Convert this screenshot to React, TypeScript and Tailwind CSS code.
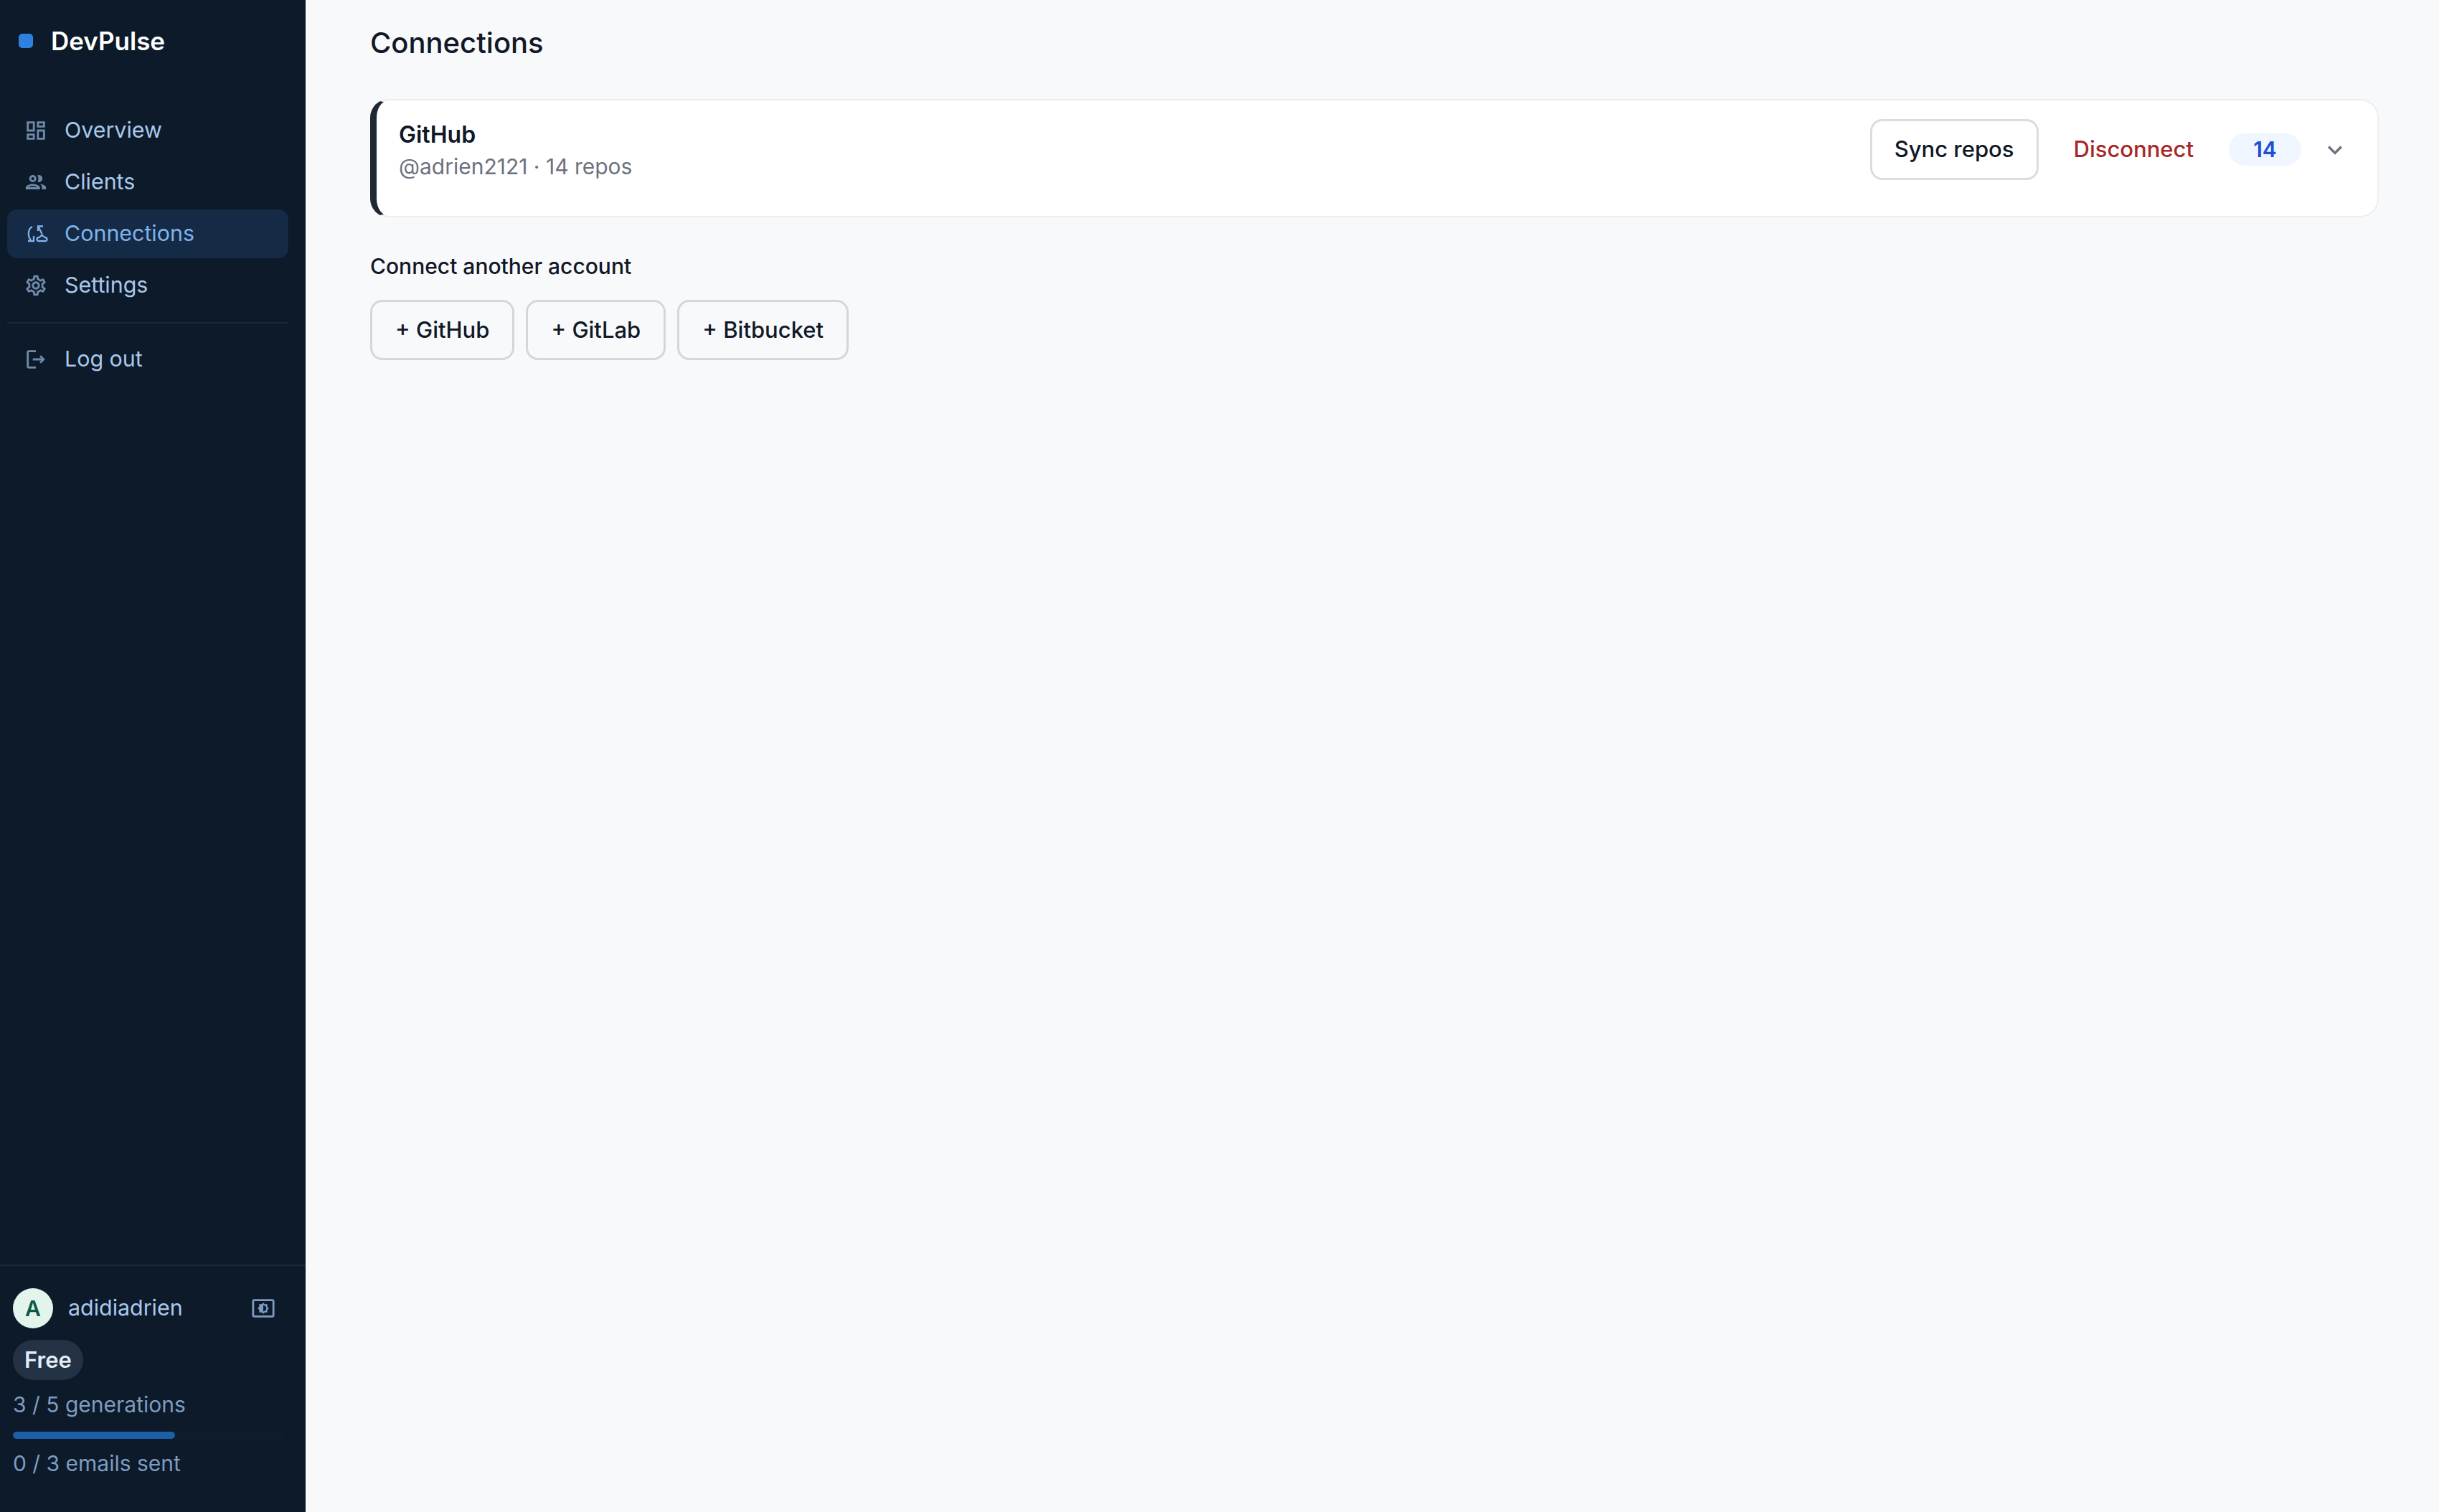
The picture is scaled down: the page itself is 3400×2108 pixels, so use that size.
import React from 'react';
import {
  MdOutlineDashboard,
  MdOutlineKeyboardArrowDown,
  MdOutlineLogout,
  MdOutlinePeople,
  MdOutlineSettings,
  MdOutlineSettingsBrightness,
} from 'react-icons/md';

function ConnectionsIcon({ className }: { className?: string }) {
  return (
    <svg viewBox="0 0 34 34" fill="none" stroke="currentColor" strokeWidth="2.3" className={className}>
      <path d="M12 7C6 10 5 20 10 26" />
      <path d="M6 27h8v-7" />
      <path d="M20 13V6.500h7" />
      <path d="M20.500 7l5 10" />
      <path d="M21 22c1.500 0 2.500-1.500 4.500-3.500 2 2 3 3.500 4.500 3.500 3.500 .5 3 5 0 5h-9c-3 0-3.500-4.500 0-5z" />
    </svg>
  );
}

const navItems = [
  { label: 'Overview', icon: MdOutlineDashboard },
  { label: 'Clients', icon: MdOutlinePeople },
  { label: 'Connections', icon: ConnectionsIcon, active: true },
  { label: 'Settings', icon: MdOutlineSettings },
];

function NavRow({ label, icon: Icon, active }: { label: string; icon: React.ElementType; active?: boolean }) {
  return (
    <div
      className={`flex h-[68px] items-center gap-[23px] rounded-[14px] pl-[23px] text-[30.4px] ${
        active ? 'bg-[#142a45] text-[#7fb2ea]' : 'text-[#a9c8ea]'
      }`}
    >
      <Icon className={`h-[34px] w-[34px] shrink-0 ${active ? 'text-[#7fb2ea]' : 'text-[#6f8aa8]'}`} />
      <span>{label}</span>
    </div>
  );
}

function Sidebar() {
  return (
    <aside className="flex h-full w-[426px] shrink-0 flex-col bg-[#0c1a2a]">
      <div className="flex h-[114px] items-center gap-[25px] pl-[26px]">
        <div className="h-[20px] w-[20px] rounded-[5px] bg-[#2f80e0]" />
        <span className="text-[35px] font-semibold text-white">DevPulse</span>
      </div>
      <nav className="mt-[34px] flex flex-col gap-[4px] pl-[10px] pr-[24px]">
        {navItems.map((item) => (
          <NavRow key={item.label} {...item} />
        ))}
        <div className="mb-[12px] mt-[13px] h-[2px] bg-[#1a2735]" />
        <NavRow label="Log out" icon={MdOutlineLogout} />
      </nav>
      <div className="mt-auto border-t-2 border-[#1a2735] pb-[45px] pl-[18px] pr-[31px] pt-[31px]">
        <div className="flex items-center">
          <div className="flex h-[56px] w-[56px] items-center justify-center rounded-full bg-[#e3f4ec] text-[30px] font-semibold text-[#0b5a45]">
            A
          </div>
          <span className="ml-[21px] text-[30.4px] text-[#a9c8ea]">adidiadrien</span>
          <MdOutlineSettingsBrightness className="ml-auto mr-[11px] h-[34px] w-[34px] text-[#7d9cc0]" />
        </div>
        <div className="mt-[16px] flex h-[56px] w-fit items-center rounded-full bg-[#233244] px-[16px] text-[31px] font-semibold text-[#e3edf8]">
          Free
        </div>
        <div className="mt-[12px] text-[30px] text-[#7d9cc0]">3 / 5 generations</div>
        <div className="mt-[15px] h-[10px] w-full rounded-full bg-[#0e1c2c]">
          <div className="h-full w-[60%] rounded-full bg-[#1a5fa8]" />
        </div>
        <div className="mt-[12px] text-[30px] text-[#7d9cc0]">0 / 3 emails sent</div>
      </div>
    </aside>
  );
}

function ConnectionCard() {
  return (
    <div className="flex items-start rounded-[26px] border-2 border-l-[9px] border-[#eceef1] border-l-[#1f2933] bg-white pb-[47px] pl-[31px] pr-[39px] pt-[26px]">
      <div>
        <div className="text-[32px] font-semibold leading-[44px] text-[#111827]">GitHub</div>
        <div className="text-[30px] leading-[44px] text-[#6b7280]">@adrien2121 · 14 repos</div>
      </div>
      <div className="ml-auto flex items-center">
        <button className="h-[85px] rounded-[17px] border-[3px] border-[#dcdcdc] bg-white px-[31px] text-[31px] font-[450] text-[#111827]">
          Sync repos
        </button>
        <span className="ml-[49px] text-[31px] font-[450] text-[#a82828]">Disconnect</span>
        <span className="ml-[49px] flex h-[45px] w-[101px] items-center justify-center rounded-full bg-[#eff6ff] text-[30px] font-semibold text-[#1d4ed8]">
          14
        </span>
        <MdOutlineKeyboardArrowDown className="ml-[27px] h-[40px] w-[40px] text-[#6b7280]" />
      </div>
    </div>
  );
}

export default function App() {
  return (
    <div className="flex h-screen w-full overflow-hidden bg-[#f8f9fb] font-['Inter',sans-serif]">
      <Sidebar />
      <main className="flex-1 pl-[90px] pr-[84px] pt-[34px]">
        <h1 className="text-[40px] font-medium leading-[52px] text-[#111827]">Connections</h1>
        <div className="mt-[52px]">
          <ConnectionCard />
        </div>
        <div className="mt-[48px] text-[30px] font-medium leading-[40px] text-[#111827]">Connect another account</div>
        <div className="mt-[27px] flex gap-[16px]">
          {['+ GitHub', '+ GitLab', '+ Bitbucket'].map((label) => (
            <button
              key={label}
              className="h-[84px] rounded-[17px] border-[3px] border-[#d4d6da] px-[32px] text-[31px] font-[450] text-[#111827]"
            >
              {label}
            </button>
          ))}
        </div>
      </main>
    </div>
  );
}
